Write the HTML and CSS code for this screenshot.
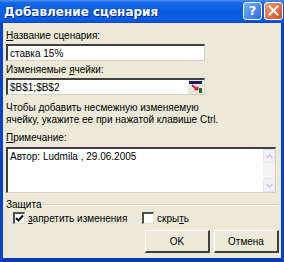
FILE: index.html
```html
<!DOCTYPE html>
<html lang="ru">
<head>
    <meta charset="UTF-8">
    <title>Добавление сценария</title>
    <link rel="stylesheet" href="styles.css">
</head>
<body>
    <div class="dialog">
        <div class="titlebar">
            <span class="title">Добавление сценария</span>
            <div class="title-buttons">
                <div class="tbtn help">?</div>
                <div class="tbtn close">
                    <svg width="11" height="11" viewBox="0 0 11 11">
                        <path d="M1.5 1.5 L9.5 9.5 M9.5 1.5 L1.5 9.5" stroke="#fff" stroke-width="2.2" stroke-linecap="square"/>
                    </svg>
                </div>
            </div>
        </div>

        <div class="content">
            <label class="label"><u>Н</u>азвание сценария:</label>
            <div class="field short">ставка 15%</div>

            <label class="label label-gap">Изменяемые <u>я</u>чейки:</label>
            <div class="field short refedit">
                <span>$B$1;$B$2</span>
                <span class="ref-btn">
                    <svg width="13" height="12" viewBox="0 0 13 12">
                        <rect x="0" y="0" width="13" height="3" fill="#1a1a6e"/>
                        <path d="M3 4 L8 8.5 M5.5 8.5 L8.5 8.5 L8.5 5.5" stroke="#d0104a" stroke-width="1.7" fill="none"/>
                        <rect x="10" y="7" width="3" height="5" fill="#2c6b2c"/>
                    </svg>
                </span>
            </div>

            <p class="hint">Чтобы добавить несмежную изменяемую<br>ячейку, укажите ее при нажатой клавише Ctrl.</p>

            <label class="label"><u>П</u>римечание:</label>
            <div class="memo">
                <div class="memo-text">Автор: Ludmila , 29.06.2005</div>
                <div class="scrollbar">
                    <div class="sb-arrow">
                        <svg width="7" height="5" viewBox="0 0 7 5"><path d="M0.5 4 L3.5 1 L6.5 4" stroke="#b9c6d8" stroke-width="1.3" fill="none"/></svg>
                    </div>
                    <div class="sb-track"></div>
                    <div class="sb-arrow">
                        <svg width="7" height="5" viewBox="0 0 7 5"><path d="M0.5 1 L3.5 4 L6.5 1" stroke="#b9c6d8" stroke-width="1.3" fill="none"/></svg>
                    </div>
                </div>
            </div>

            <div class="group">
                <span class="group-title">Защита</span>
                <span class="group-line"></span>
            </div>

            <div class="checks">
                <div class="check first">
                    <span class="box">
                        <svg width="9" height="9" viewBox="0 0 9 9">
                            <path d="M1 4 L3.5 6.5 L8 1.5" stroke="#111" stroke-width="2" fill="none"/>
                        </svg>
                    </span>
                    <span><u>з</u>апретить изменения</span>
                </div>
                <div class="check">
                    <span class="box"></span>
                    <span>скры<u>т</u>ь</span>
                </div>
            </div>

            <div class="buttons">
                <div class="btn">OK</div>
                <div class="btn">Отмена</div>
            </div>
        </div>
    </div>
</body>
</html>
```

FILE: styles.css
```css
body {
    margin: 0;
    font-family: 'Liberation Sans', Arial, sans-serif;
    font-size: 10px;
    color: #000000;
    background: #ffffff;
}

.dialog {
    width: 284px;
    height: 262px;
    box-sizing: border-box;
    background: #ece9d8;
    border-left: 3px solid #0842c8;
    border-right: 3px solid #0842c8;
    border-bottom: 4px solid #0a3cb4;
    display: flex;
    flex-direction: column;
}

.titlebar {
    height: 23px;
    flex: none;
    margin: 0 -3px 0 -3px;
    padding: 0 1px 0 4px;
    background: linear-gradient(to bottom, #4a93f6 0%, #1666e8 12%, #0a5ae0 50%, #0c5ee2 85%, #0846cc 100%);
    display: flex;
    align-items: center;
    justify-content: space-between;
}

.title {
    color: #ffffff;
    font-family: 'DejaVu Sans', sans-serif;
    font-weight: bold;
    font-size: 12px;
    text-shadow: 1px 1px 0 #0a2a8a;
}

.title-buttons {
    display: flex;
    gap: 2px;
    margin-top: -2px;
}

.tbtn {
    width: 19px;
    height: 18px;
    box-sizing: border-box;
    border: 1px solid #ffffff;
    border-radius: 3px;
    display: flex;
    align-items: center;
    justify-content: center;
    color: #ffffff;
    font-weight: bold;
    font-size: 13px;
    font-family: 'DejaVu Sans', sans-serif;
}

.help {
    background: linear-gradient(135deg, #78b0ff, #2a6cea);
}

.close {
    background: linear-gradient(135deg, #f29a72, #d64a1e);
}

.content {
    flex: 1;
    padding: 7px 2px 0 3px;
    display: flex;
    flex-direction: column;
}

.label {
    display: block;
    line-height: 12px;
}

.label-gap {
    margin-top: 3px;
}

.field {
    margin-top: 2px;
    height: 17px;
    box-sizing: border-box;
    background: #ffffff;
    border-top: 2px solid #404040;
    border-left: 2px solid #404040;
    border-right: 1px solid #d4d0c8;
    border-bottom: 1px solid #d4d0c8;
    padding: 1px 2px;
    line-height: 13px;
}

.short {
    width: 199px;
}

.refedit {
    display: flex;
    justify-content: space-between;
    align-items: center;
    padding-right: 1px;
}

.ref-btn {
    display: flex;
    background: #ece9d8;
    padding: 1px;
}

.hint {
    margin: 7px 0 6px 0;
    line-height: 12px;
}

.memo {
    margin-top: 3px;
    height: 46px;
    width: 270px;
    box-sizing: border-box;
    background: #ffffff;
    border-top: 2px solid #404040;
    border-left: 2px solid #404040;
    border-right: 1px solid #d4d0c8;
    border-bottom: 1px solid #d4d0c8;
    display: flex;
}

.memo-text {
    flex: 1;
    padding: 1px 2px;
    line-height: 13px;
}

.scrollbar {
    width: 12px;
    display: flex;
    flex-direction: column;
    background: #f4f3ef;
}

.sb-arrow {
    height: 14px;
    box-sizing: border-box;
    border: 1px solid #e2e6ee;
    border-radius: 2px;
    background: #f0f2f6;
    display: flex;
    align-items: center;
    justify-content: center;
}

.sb-track {
    flex: 1;
}

.group {
    margin-top: 6px;
    display: flex;
    align-items: center;
    gap: 3px;
}

.group-line {
    flex: 1;
    height: 0;
    border-top: 1px solid #d0ccbc;
    border-bottom: 1px solid #ffffff;
}

.checks {
    margin-top: 2px;
    display: flex;
}

.check {
    display: flex;
    align-items: center;
    gap: 3px;
    width: 136px;
}

.check.first {
    padding-left: 7px;
    width: 129px;
}

.box {
    width: 12px;
    height: 12px;
    box-sizing: border-box;
    background: #ffffff;
    border-top: 2px solid #505050;
    border-left: 2px solid #505050;
    border-right: 1px solid #e0ddd0;
    border-bottom: 1px solid #e0ddd0;
    display: flex;
    align-items: center;
    justify-content: center;
}

.box svg {
    margin: -1px 0 0 -1px;
}

.buttons {
    margin-top: 6px;
    display: flex;
    justify-content: flex-end;
    gap: 4px;
}

.btn {
    width: 65px;
    height: 23px;
    box-sizing: border-box;
    border-top: 1px solid #ffffff;
    border-left: 1px solid #ffffff;
    border-right: 2px solid #404040;
    border-bottom: 2px solid #404040;
    background: #ece9d8;
    display: flex;
    align-items: center;
    justify-content: center;
}
```
